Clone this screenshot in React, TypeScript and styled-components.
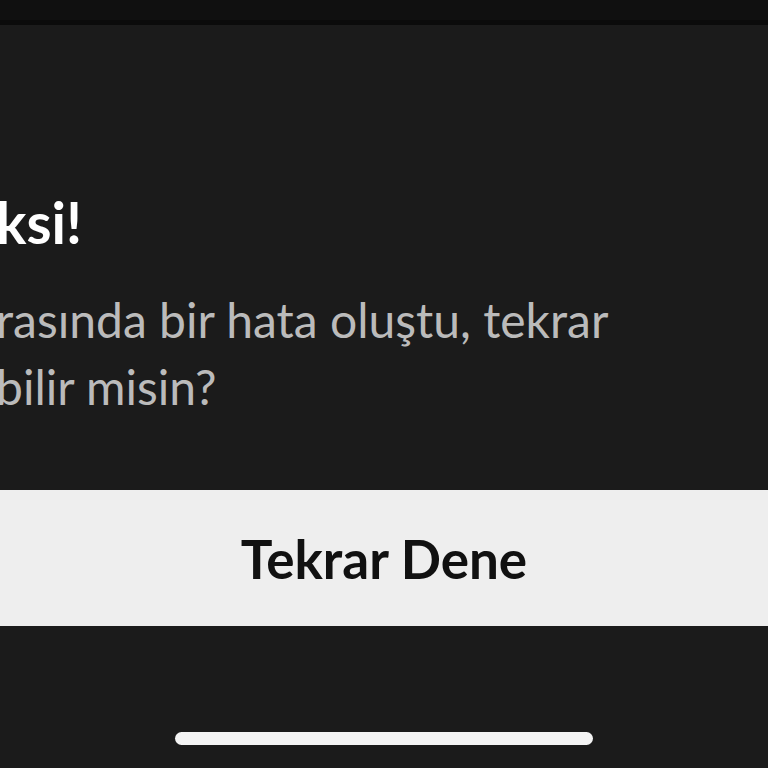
import React from 'react';
import styled, {createGlobalStyle} from 'styled-components';

const GlobalStyle = createGlobalStyle`
  html, body { margin: 0; padding: 0; background: #1b1b1b; }
  body { font-family: Lato, "Open Sans", sans-serif; }
`;

const Page = styled.div`
  height: 768px;
  overflow: hidden;
  display: flex;
  flex-direction: column;
  background: #1b1b1b;
`;

const TopBar = styled.div`
  height: 20px;
  flex-shrink: 0;
  background: #101010;
  border-bottom: 5px solid #0b0b0b;
`;

const Content = styled.section`
  flex: 1;
  display: flex;
  flex-direction: column;
  padding-top: 167px;
  margin-left: -4px;
`;

const Title = styled.h1`
  margin: 0;
  font-size: 57px;
  line-height: 60px;
  font-weight: 700;
  color: #ffffff;
`;

const Message = styled.p`
  margin: 34px 0 0;
  font-size: 48px;
  line-height: 67px;
  font-weight: 400;
  color: #bbbbbb;
`;

const RetryButton = styled.button`
  height: 136px;
  flex-shrink: 0;
  border: none;
  background: #eeeeee;
  color: #111111;
  font-family: Lato, "Open Sans", sans-serif;
  font-size: 53px;
  font-weight: 700;
  cursor: pointer;
`;

const Footer = styled.div`
  height: 142px;
  flex-shrink: 0;
  display: flex;
  justify-content: center;
  align-items: flex-end;
  padding-bottom: 23px;
  box-sizing: border-box;
`;

const HomeIndicator = styled.div`
  width: 418px;
  height: 13px;
  border-radius: 7px;
  background: #f4f4f4;
`;

export default function App() {
  return (
    <Page>
      <GlobalStyle />
      <TopBar />
      <Content>
        <Title>ksi!</Title>
        <Message>
          rasında bir hata oluştu, tekrar
          <br />
          bilir misin?
        </Message>
      </Content>
      <RetryButton>Tekrar Dene</RetryButton>
      <Footer>
        <HomeIndicator />
      </Footer>
    </Page>
  );
}
